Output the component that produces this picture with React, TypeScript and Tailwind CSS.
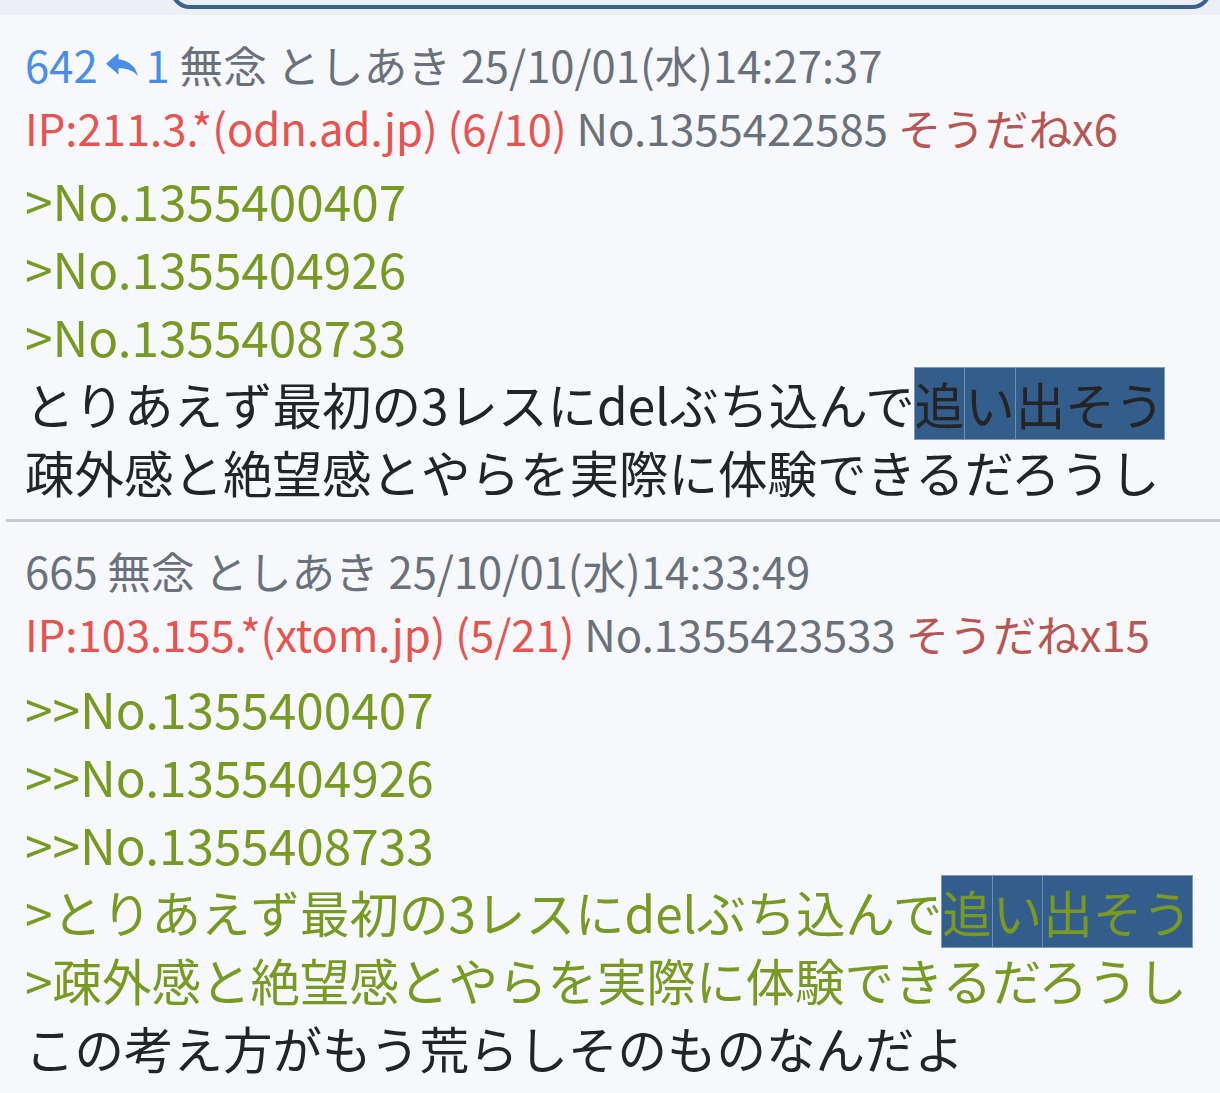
import React from "react";

const font = { fontFamily: '"Noto Sans CJK JP", "Noto Sans", sans-serif' };

function ReplyIcon() {
  return (
    <svg
      viewBox="3 5 18 15"
      width="32"
      height="23"
      preserveAspectRatio="none"
      className="inline-block mx-[8px] align-[7px]"
      fill="#4a8de8"
    >
      <path d="M10 9V5l-7 7 7 7v-4.1c5 0 8.5 1.6 11 5.1-1-5-4-10-11-11z" />
    </svg>
  );
}

function Hl({ children }: { children: string }) {
  return (
    <span className="bg-[#335d8a] outline outline-1 outline-[#7c9bbd]">
      {children.split("").map((c, i) => (
        <span key={i} className={i < 2 ? "border-r border-[#6f8fb3]" : ""}>{c}</span>
      ))}
    </span>
  );
}

export default function App() {
  return (
    <div className="w-[1220px] h-[1093px] overflow-hidden bg-[#f7f8fc]" style={font}>
      <div className="h-[15px] bg-[#eceff6] flex">
        <div className="ml-[170px] mr-[8px] flex-1 h-[40px] -mt-[31px] border-[4px] border-[#3a6290] rounded-[22px]" />
      </div>
      {/* Post 1 */}
      <div className="pl-[25px] pt-[18px]">
        <div className="text-[43.6px] leading-[63px] text-[#6b717a] whitespace-nowrap">
          <span className="text-[#4a8de8]">642</span>
          <ReplyIcon />
          <span className="text-[#4a8de8]">1</span> 無念 としあき 25/10/01(水)14:27:37
        </div>
        <div className="text-[43.6px] leading-[63px] text-[#6b717a] whitespace-nowrap">
          <span className="text-[#e8524f]">IP:211.3.*(odn.ad.jp) (6/10)</span> No.1355422585{" "}
          <span className="text-[#b85656]">そうだねx6</span>
        </div>
        <div className="mt-[7px] text-[49.5px] leading-[68px] text-[#222426] whitespace-nowrap">
          <div className="text-[#789922]">&gt;No.1355400407</div>
          <div className="text-[#789922]">&gt;No.1355404926</div>
          <div className="text-[#789922]">&gt;No.1355408733</div>
          <div>
            とりあえず最初の3レスにdelぶち込んで<Hl>追い出そう</Hl>
          </div>
          <div>疎外感と絶望感とやらを実際に体験できるだろうし</div>
        </div>
      </div>
      <div className="mt-[13px] ml-[6px] h-[3px] bg-[#c9cbd1]" />
      {/* Post 2 */}
      <div className="pl-[25px] pt-[17px]">
        <div className="text-[43.6px] leading-[63px] text-[#6b717a] whitespace-nowrap">
          665 無念 としあき 25/10/01(水)14:33:49
        </div>
        <div className="text-[43.6px] leading-[63px] text-[#6b717a] whitespace-nowrap">
          <span className="text-[#e8524f]">IP:103.155.*(xtom.jp) (5/21)</span> No.1355423533{" "}
          <span className="text-[#b85656]">そうだねx15</span>
        </div>
        <div className="mt-[9px] text-[49.5px] leading-[68px] text-[#222426] whitespace-nowrap">
          <div className="text-[#789922]">&gt;&gt;No.1355400407</div>
          <div className="text-[#789922]">&gt;&gt;No.1355404926</div>
          <div className="text-[#789922]">&gt;&gt;No.1355408733</div>
          <div className="text-[#789922]">
            &gt;とりあえず最初の3レスにdelぶち込んで<Hl>追い出そう</Hl>
          </div>
          <div className="text-[#789922]">&gt;疎外感と絶望感とやらを実際に体験できるだろうし</div>
          <div>この考え方がもう荒らしそのものなんだよ</div>
        </div>
      </div>
    </div>
  );
}
